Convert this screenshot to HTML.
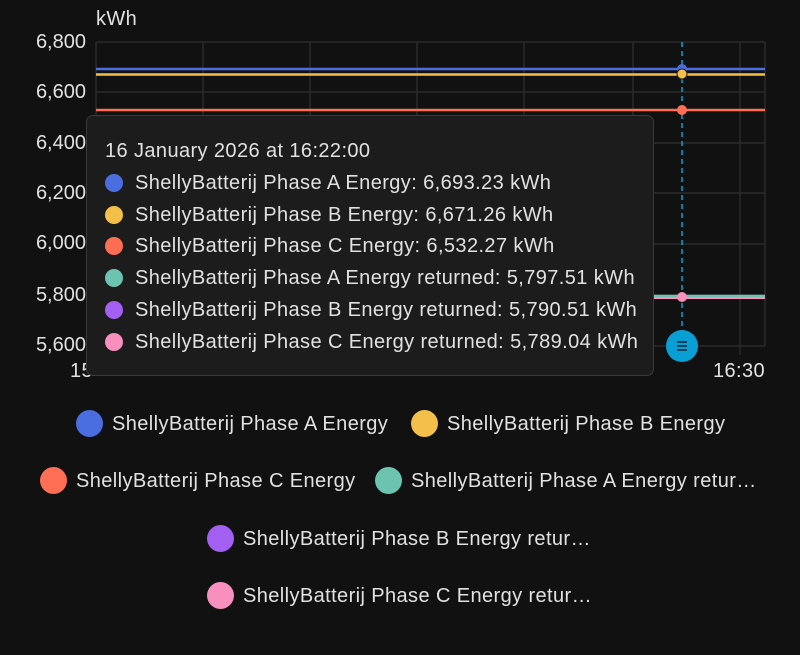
<!DOCTYPE html><html><head><style>
body{margin:0;background:#111111;width:800px;height:655px;overflow:hidden;font-family:"Liberation Sans",sans-serif;color:#e1e1e1;position:relative;letter-spacing:0.4px}
.a{position:absolute;white-space:nowrap}
.yl{position:absolute;right:714px;font-size:20px;color:#e1e1e1;line-height:20px;letter-spacing:0}
.tt{position:absolute;left:86px;top:115px;width:568px;height:261px;background:#1c1c1c;border:1px solid #3a3a3a;border-radius:7px;box-sizing:border-box}
.tt div{position:absolute;left:48px;font-size:20px;line-height:22px;color:#e1e1e1;white-space:nowrap}
.tt i{position:absolute;left:-30px;top:2px;width:18px;height:18px;border-radius:50%}
.lg{position:absolute;font-size:20px;line-height:24px;white-space:nowrap;color:#e1e1e1}
.lg i{position:absolute;left:-36px;top:-2px;width:27px;height:27px;border-radius:50%}
</style></head><body>
<div class="a" style="left:96px;top:8px;font-size:20px">kWh</div>
<div class="yl" style="top:32px">6,800</div>
<div class="yl" style="top:82px">6,600</div>
<div class="yl" style="top:133px">6,400</div>
<div class="yl" style="top:183px">6,200</div>
<div class="yl" style="top:233px">6,000</div>
<div class="yl" style="top:285px">5,800</div>
<div class="yl" style="top:335px">5,600</div>
<div class="a" style="left:70px;top:360px;font-size:20px">15</div>
<div class="a" style="left:713px;top:360px;font-size:20px">16:30</div>
<svg class="a" style="left:0;top:0" width="800" height="400">
<g stroke="#2a2a2a" stroke-width="1.5" fill="none">
<line x1="96" y1="42" x2="765" y2="42"/><line x1="96" y1="92" x2="765" y2="92"/><line x1="96" y1="143" x2="765" y2="143"/><line x1="96" y1="193" x2="765" y2="193"/><line x1="96" y1="244" x2="765" y2="244"/><line x1="96" y1="295" x2="765" y2="295"/><line x1="96" y1="346" x2="765" y2="346"/>
<line x1="96" y1="42" x2="96" y2="346"/><line x1="203" y1="42" x2="203" y2="346"/><line x1="310" y1="42" x2="310" y2="346"/><line x1="417" y1="42" x2="417" y2="346"/><line x1="524" y1="42" x2="524" y2="346"/><line x1="633" y1="42" x2="633" y2="346"/><line x1="740" y1="42" x2="740" y2="355"/><line x1="765" y1="42" x2="765" y2="346"/>
</g>
<line x1="96" y1="69" x2="765" y2="69" stroke="#4a6ee0" stroke-width="2.5"/>
<line x1="96" y1="74.5" x2="765" y2="74.5" stroke="#f5c04a" stroke-width="2.5"/>
<line x1="96" y1="110" x2="765" y2="110" stroke="#fe6e55" stroke-width="2.5"/>
<line x1="96" y1="296" x2="765" y2="296" stroke="#6cc4b0" stroke-width="2.5"/>
<line x1="96" y1="298" x2="765" y2="298" stroke="#f88fbd" stroke-width="2"/>
<line x1="682" y1="42" x2="682" y2="346" stroke="#0ea0dc" stroke-width="1.5" stroke-dasharray="5,4"/>
<circle cx="682" cy="69" r="5" fill="#4a6ee0"/><circle cx="682" cy="74" r="5" fill="#f5c04a" stroke="#222" stroke-width="1"/>
<circle cx="682" cy="110" r="5" fill="#fe6e55"/><circle cx="682" cy="297" r="5" fill="#f88fbd"/>
<circle cx="682" cy="346" r="16" fill="#0a9fd4"/>
<g stroke="#0b2a3a" stroke-width="1.6"><line x1="677" y1="342" x2="687" y2="342"/><line x1="677" y1="346" x2="687" y2="346"/><line x1="677" y1="350" x2="687" y2="350"/></g>
</svg>
<div class="tt">
<div style="left:18px;top:24px">16 January 2026 at 16:22:00</div>
<div style="top:56px"><i style="background:#4a6ee0"></i>ShellyBatterij Phase A Energy: 6,693.23 kWh</div>
<div style="top:88px"><i style="background:#f5c04a"></i>ShellyBatterij Phase B Energy: 6,671.26 kWh</div>
<div style="top:119px"><i style="background:#fe6e55"></i>ShellyBatterij Phase C Energy: 6,532.27 kWh</div>
<div style="top:151px"><i style="background:#6cc4b0"></i>ShellyBatterij Phase A Energy returned: 5,797.51 kWh</div>
<div style="top:183px"><i style="background:#a35ff2"></i>ShellyBatterij Phase B Energy returned: 5,790.51 kWh</div>
<div style="top:215px"><i style="background:#f88fbd"></i>ShellyBatterij Phase C Energy returned: 5,789.04 kWh</div>
</div>
<div class="lg" style="left:112px;top:412px"><i style="background:#4a6ee0"></i>ShellyBatterij Phase A Energy</div>
<div class="lg" style="left:447px;top:412px"><i style="background:#f5c04a"></i>ShellyBatterij Phase B Energy</div>
<div class="lg" style="left:76px;top:469px"><i style="background:#fe6e55"></i>ShellyBatterij Phase C Energy</div>
<div class="lg" style="left:411px;top:469px"><i style="background:#6cc4b0"></i>ShellyBatterij Phase A Energy retur…</div>
<div class="lg" style="left:243px;top:527px"><i style="background:#a35ff2"></i>ShellyBatterij Phase B Energy retur…</div>
<div class="lg" style="left:243px;top:584px"><i style="background:#f88fbd"></i>ShellyBatterij Phase C Energy retur…</div>
</body></html>
